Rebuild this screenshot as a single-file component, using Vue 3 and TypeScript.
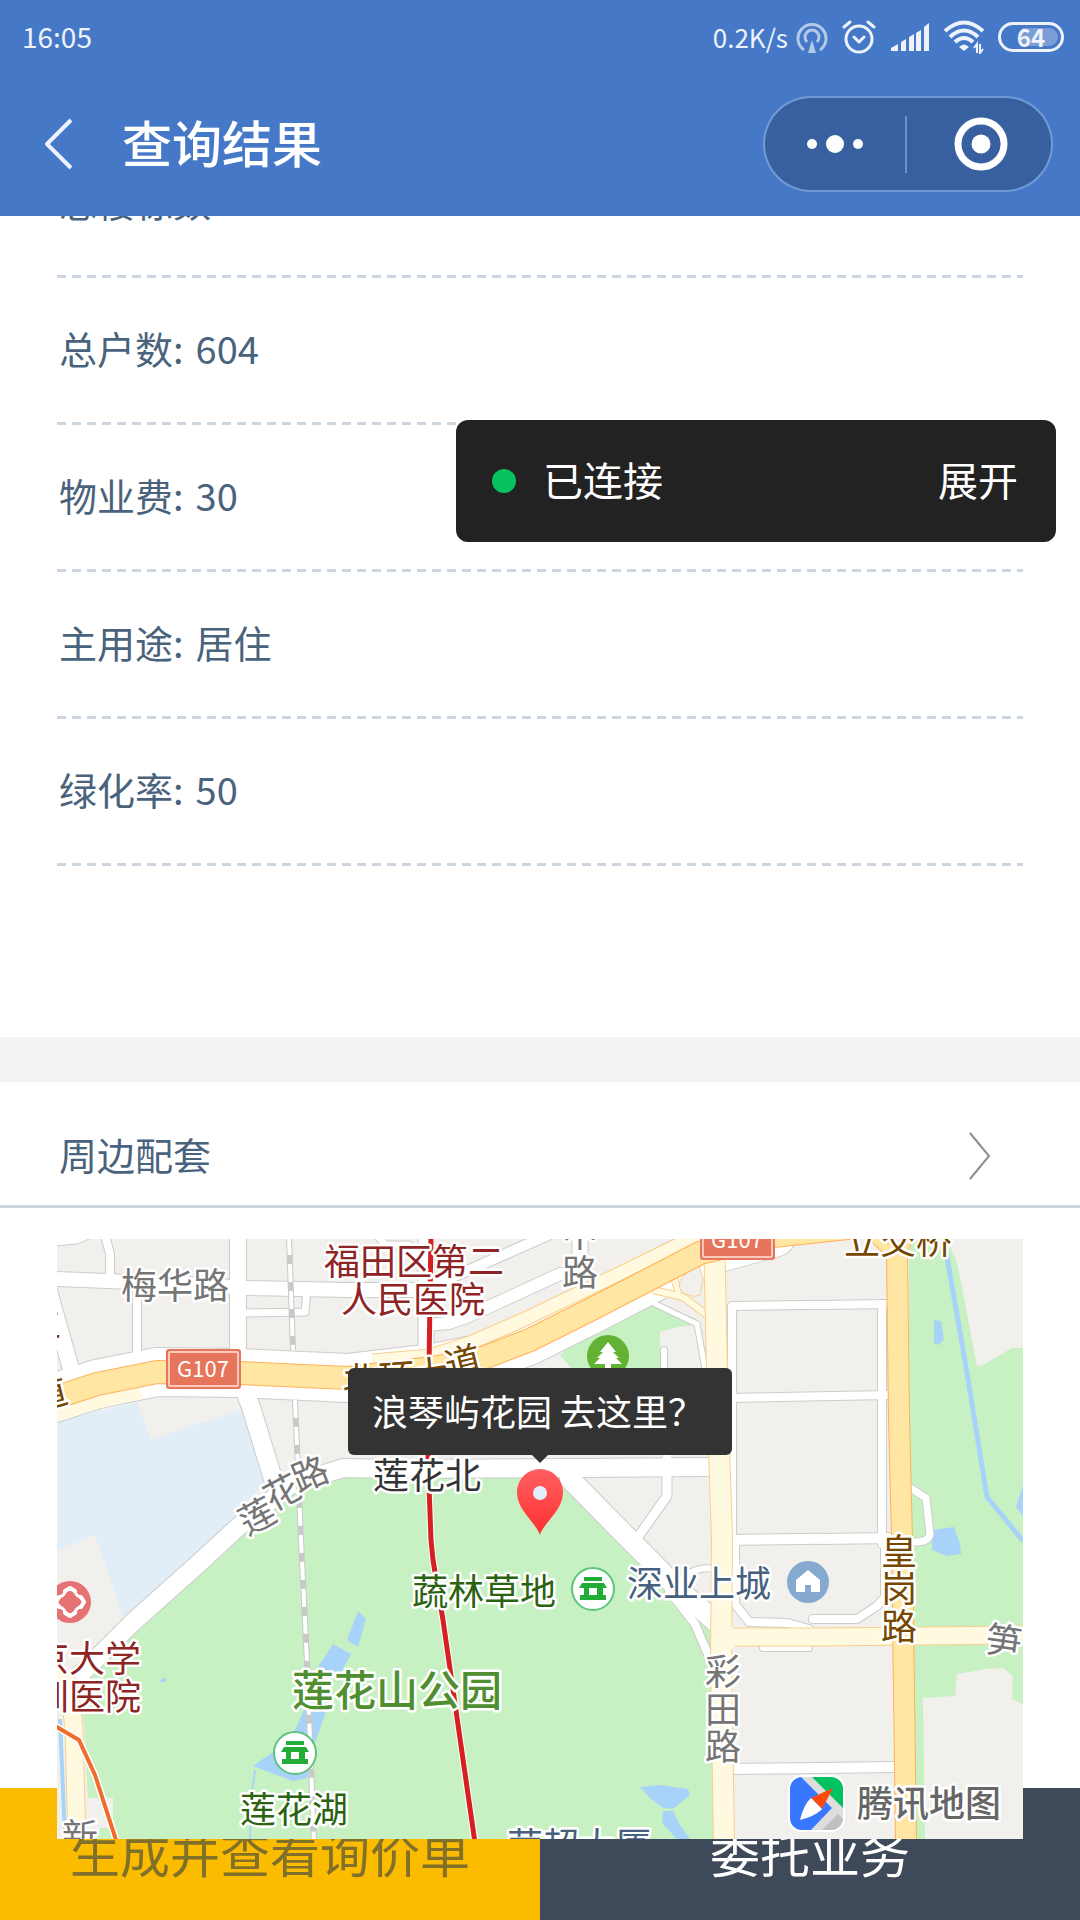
<script setup lang="ts">
interface InfoRow {
  label: string
  value: string
}

interface MapLabel {
  text: string
  x: number
  y: number
  kind: string
  turn?: number
}

const rows: InfoRow[] = [
  { label: '总楼栋数', value: '' },
  { label: '总户数:', value: '604' },
  { label: '物业费:', value: '30' },
  { label: '主用途:', value: '居住' },
  { label: '绿化率:', value: '50' },
]

// Streets that share one casing pass and one fill pass, so junctions stay open.
const streets: { d: string; w: number }[] = [
  { d: 'M0 40 126 45 190 49 290 51 366 51', w: 14 },
  { d: 'M-4 3 20 1 40 -8', w: 7 },
  { d: 'M48 -4 53 15 53 42', w: 8 },
  { d: 'M-10 45 14 130', w: 16 },
  { d: 'M80 45V118', w: 8 },
  { d: 'M181 -4V125', w: 16 },
  { d: 'M186 74 248 73 250 50', w: 7 },
  { d: 'M369 -4V125', w: 15 },
  { d: 'M370 86 392 84 412 77 503 35', w: 12 },
  { d: 'M372 48 410 32 500 -8', w: 10 },
  { d: 'M320 -4 328 6 352 6 372 28', w: 7 },
  { d: 'M523 -4V62', w: 15 },
  { d: 'M190 158 194 168 217 243', w: 18 },
  { d: 'M10 449 76 383 140 326 181 288 233 246 286 229 343 230 520 229 655 228', w: 18 },
  { d: 'M513 240 570 298 593 321 623 352 660 384', w: 20 },
  { d: 'M612 352 638 385 655 425', w: 8 },
  { d: 'M660 330Q638 326 622 342', w: 6 },
  { d: 'M610 216V257L576 305', w: 9 },
  { d: 'M607 111V134', w: 6 },
  { d: 'M533 90 588 60 640 85 648 130', w: 5 },
  { d: 'M675 300V67L833 65', w: 8 },
  { d: 'M825 65V305', w: 8 },
  { d: 'M670 159 835 156', w: 8 },
  { d: 'M668 301 838 299', w: 10 },
  { d: 'M678 300V365L692 383 730 384 752 390', w: 8 },
  { d: 'M828 300V358L820 367 800 380H756', w: 8 },
  { d: 'M706 409H752', w: 6 },
  { d: 'M668 530 840 528', w: 10 },
  { d: 'M852 248 869 259 873 295Q872 304 852 303', w: 7 },
]

const labels: MapLabel[] = [
  { text: '梅华路', x: 118, y: 60, kind: 'street' },
  { text: '福田区第二', x: 357, y: 36, kind: 'hospital' },
  { text: '人民医院', x: 356, y: 74, kind: 'hospital' },
  { text: '中', x: 523, y: 8, kind: 'street' },
  { text: '路', x: 523, y: 47, kind: 'street' },
  { text: '北', x: 304, y: 154, kind: 'avenue', turn: 2 },
  { text: '环', x: 340, y: 151, kind: 'avenue', turn: -4 },
  { text: '大', x: 374, y: 148, kind: 'avenue', turn: -8 },
  { text: '道', x: 406, y: 136, kind: 'avenue', turn: -14 },
  { text: '道', x: -8, y: 168, kind: 'avenue', turn: -14 },
  { text: '生', x: -14, y: 97, kind: 'hospital' },
  { text: '立交桥', x: 841, y: 15, kind: 'avenue' },
  { text: '莲', x: 200, y: 290, kind: 'street', turn: -28 },
  { text: '花', x: 225, y: 266, kind: 'street', turn: -28 },
  { text: '路', x: 253, y: 248, kind: 'street', turn: -22 },
  { text: '莲花北', x: 370, y: 250, kind: 'place' },
  { text: '蔬林草地', x: 427, y: 366, kind: 'lawn' },
  { text: '深业上城', x: 642, y: 358, kind: 'estate' },
  { text: '皇', x: 842, y: 326, kind: 'avenue' },
  { text: '岗', x: 842, y: 363, kind: 'avenue' },
  { text: '路', x: 842, y: 401, kind: 'avenue' },
  { text: '彩', x: 666, y: 446, kind: 'street' },
  { text: '田', x: 666, y: 484, kind: 'street' },
  { text: '路', x: 666, y: 521, kind: 'street' },
  { text: '笋', x: 947, y: 415, kind: 'street', turn: 8 },
  { text: '莲花山公园', x: 340, y: 467, kind: 'park' },
  { text: '莲花湖', x: 237, y: 584, kind: 'lawn' },
  { text: '京大学', x: 30, y: 433, kind: 'hospital' },
  { text: '圳医院', x: 30, y: 471, kind: 'hospital' },
  { text: '新', x: 23, y: 611, kind: 'street' },
  { text: '荣超大厦', x: 522, y: 620, kind: 'estate' },
]

const pavilions = [
  { x: 536, y: 350 },
  { x: 238, y: 514 },
]

const turned = (l: MapLabel): string | undefined =>
  l.turn ? `rotate(${l.turn} ${l.x} ${l.y - 13})` : undefined
</script>

<template>
  <div class="page">
    <header class="header">
      <div class="status">
        <time class="clock">16:05</time>
        <div class="indicators">
          <div class="network">
            <span class="speed">0.2K/s</span>
            <svg width="32" height="34" viewBox="0 0 32 34" fill="none" stroke="#b4c8e9" stroke-width="3" aria-hidden="true">
              <path d="M8 30A14 14 0 1 1 24 30" />
              <path d="M11 22A7 7 0 1 1 21 22" />
              <path d="M16 20 20 33H12Z" fill="#b4c8e9" stroke="none" />
            </svg>
          </div>
          <svg width="34" height="34" viewBox="0 0 34 34" fill="none" stroke="#edf2fb" stroke-width="3" stroke-linecap="round" stroke-linejoin="round" aria-hidden="true">
            <circle cx="17" cy="19" r="13" />
            <path d="M12 17 17 22 22 17M2 7 8 2M32 7 26 2" />
          </svg>
          <svg width="40" height="30" viewBox="0 0 40 30" fill="#edf2fb" aria-hidden="true">
            <path d="M1 26 8 22V29H1ZM11 20 16 17V29H11ZM19 15 24 12V29H19ZM26 11 31 8V29H26ZM34 5 39 1V29H34Z" />
          </svg>
          <svg width="40" height="34" viewBox="0 0 40 34" fill="none" stroke="#edf2fb" aria-hidden="true">
            <path d="M1 11Q20 -6 39 11M6 17Q20 4 34 17M11 22Q20 14 29 22" stroke-width="4" />
            <path d="M20 31 15 27Q20 22 25 27Z" fill="#edf2fb" stroke="none" />
            <path d="M33 33V24L30 28M36 24V33L39 29" stroke-width="2" />
          </svg>
          <span class="battery">64</span>
        </div>
      </div>
      <div class="nav">
        <button class="back" type="button" aria-label="返回">
          <svg width="30" height="54" viewBox="0 0 30 54" fill="none" stroke="#edf2fb" stroke-width="4" stroke-linejoin="round" aria-hidden="true">
            <path d="M27 3 3 27 27 51" />
          </svg>
        </button>
        <h1 class="title">查询结果</h1>
        <div class="capsule">
          <button type="button" aria-label="更多">
            <svg width="60" height="24" viewBox="0 0 60 24" fill="#fff" aria-hidden="true">
              <circle cx="7" cy="12" r="5" />
              <circle cx="30" cy="12" r="9" />
              <circle cx="53" cy="12" r="5" />
            </svg>
          </button>
          <i class="capsule-line"></i>
          <button type="button" aria-label="关闭">
            <svg width="54" height="54" viewBox="0 0 54 54" aria-hidden="true">
              <circle cx="27" cy="27" r="23" fill="none" stroke="#fff" stroke-width="7" />
              <circle cx="27" cy="27" r="9.5" fill="#fff" />
            </svg>
          </button>
        </div>
      </div>
    </header>

    <main>
      <ul class="info">
        <li v-for="row in rows" :key="row.label">
          <span>{{ row.label }}</span>
          <span>{{ row.value }}</span>
        </li>
      </ul>

      <section class="nearby">
        <a class="nearby-head" href="#map">
          <span>周边配套</span>
          <svg width="24" height="48" viewBox="0 0 24 48" fill="none" stroke="#8f8f8f" stroke-width="2" aria-hidden="true">
            <path d="M2 1 21 24 2 47" />
          </svg>
        </a>

        <div id="map" class="map">
          <svg class="map-canvas" viewBox="0 0 966 600" role="img" aria-label="地图">
            <defs>
              <linearGradient id="pinFill" x1="0" y1="0" x2="0" y2="1">
                <stop offset="0" stop-color="#ff5f5f" />
                <stop offset="1" stop-color="#ff3030" />
              </linearGradient>
              <clipPath id="logoShape"><rect width="53" height="53" rx="12" /></clipPath>
            </defs>

            <rect width="966" height="600" fill="#f1f0ed" />
            <path fill="#e1eef8" d="M0 182 80 163 94 200 185 171 210 241 156 305 75 374 66 377 38 296 0 311Z" />
            <g fill="#c8f1c3">
              <path d="M286 233 513 236 655 390 660 600H40L43 589H56V559H31L27 488 22 441 76 383 178 293 233 246Z" />
              <path d="M596 63 533 91 503 116 515 130H603V93L620 88 640 86 647 97 640 80Z" />
              <path d="M852 0 893 8 900 23 920 127 926 126 955 109H966V465L955 460 956 437 946 429 930 430 900 435 898 457 866 459 868 600H850Z" />
            </g>
            <g fill="#a8d3f8">
              <path d="M877 81 884 82 887 100 882 106 877 104Z" />
              <path d="M875 291 897 288 903 305 904 315 890 317 875 311Z" />
              <path d="M966 246 959 268 966 277Z" />
              <path d="M301 372 309 380 301 408 290 401Z" />
              <path d="M276 405 294 415 280 441 261 428Z" />
              <path d="M273 461 258 504 250 539 236 542 196 527 216 513 238 491 250 464Z" />
              <path d="M583 548 603 546 631 550 633 556 616 570 606 569 593 559Z" />
              <path d="M606 572 616 572 623 586 633 600 620 600 605 584Z" />
              <path d="M103 442 108 438 110 441 105 444Z" />
            </g>
            <g fill="none" stroke="#a8d3f8">
              <path d="M889 12 910 134 930 258 966 302" stroke-width="5" />
              <path d="M198 531 195 554 193 600" stroke-width="2" />
              <path d="M3 480 8 600" stroke-width="4" />
            </g>

            <g fill="none" stroke-linejoin="round">
              <g stroke="#cccccb" stroke-linecap="round">
                <path v-for="s in streets" :key="s.d" :d="s.d" :stroke-width="s.w + 2" />
                <path d="M-6 160 40 145 100 133 183 134 290 139 376 129 426 119 473 101 533 71 643 14 716 -6" stroke-width="50" />
              </g>
              <g stroke="#fff" stroke-linecap="round">
                <path v-for="s in streets" :key="s.d" :d="s.d" :stroke-width="s.w" />
                <path d="M-6 160 40 145 100 133 183 134 290 139 376 129 426 119 473 101 533 71 643 14 716 -6" stroke-width="48" />
              </g>
              <path d="M-4 178 40 164 84 154" stroke="#fff9df" stroke-width="12" />
              <path d="M316 122 373 117 413 104 466 81 566 33 650 -8" stroke="#f9cf8c" stroke-width="15" />
              <path d="M316 122 373 117 413 104 466 81 566 33 650 -8" stroke="#fff9df" stroke-width="13" />
              <path d="M596 51 626 58 650 76M616 36 622 54" stroke="#f9cf8c" stroke-width="8" />
              <path d="M596 51 626 58 650 76M616 36 622 54" stroke="#fff9df" stroke-width="6" />
              <g stroke="#f9cf8c">
                <path d="M657 0 658 40 661 180 665 300 664 420 667 604" stroke-width="22" />
                <path d="M668 398 760 398 970 396" stroke-width="19" />
                <path d="M-4 430 12 445 17 490 20 604" stroke-width="19" />
              </g>
              <g stroke="#fff9df">
                <path d="M657 0 658 40 661 180 665 300 664 420 667 604" stroke-width="20" />
                <path d="M668 398 760 398 970 396" stroke-width="17" />
                <path d="M-4 430 12 445 17 490 20 604" stroke-width="17" />
                <path d="M670 386Q676 398 700 399M670 412Q676 399 700 398" stroke-width="6" />
              </g>
              <path d="M642 26 646 40 643 56Q634 60 624 52 618 42 632 32Z" fill="#f1f0ed" stroke="#f9cf8c" />
              <g stroke="#ffb158">
                <path d="M-6 160 40 145 100 133 183 134 290 139 376 129 426 119 473 101 533 71 643 14 716 -3 800 -12" stroke-width="24" />
                <path d="M814 -6 838 18M852 -6 842 20" stroke-width="12" />
                <path d="M840 16 842 180 845 301 849 604" stroke-width="22" />
              </g>
              <g stroke="#ffe6a2">
                <path d="M-6 160 40 145 100 133 183 134 290 139 376 129 426 119 473 101 533 71 643 14 716 -3 800 -12" stroke-width="22" />
                <path d="M814 -6 838 18M852 -6 842 20" stroke-width="10" />
                <path d="M840 14 842 180 845 301 849 604" stroke-width="20" />
              </g>

              <path d="M232 -2 236 111M238 161 241 231 244 301 250 424 257 604" stroke="#c9c9ca" stroke-width="6" />
              <path d="M232 -2 236 111M238 161 241 231 244 301 250 424 257 604" stroke="#fff" stroke-width="4" stroke-dasharray="18 9" />
              <path d="M-2 487 22 501 38 536 60 604" stroke="#fff" stroke-width="7" />
              <path d="M-2 487 22 501 38 536 60 604" stroke="#f06c2c" stroke-width="4" />
              <path d="M374 -2 373 58 372 130 371 220 374 301 376 321 386 381 418 604" stroke="#fff" stroke-width="7" />
              <path d="M374 -2 373 58 372 130 371 220 374 301 376 321 386 381 418 604" stroke="#d51f20" stroke-width="5" />
            </g>

            <g v-for="(top, i) in [110, -19]" :key="top" :transform="`translate(${i ? 643 : 109} ${top})`">
              <rect width="75" height="40" rx="3" fill="#e7755b" />
              <rect x="3" y="3" width="69" height="34" rx="1" fill="none" stroke="#f9c9bd" stroke-width="2" />
              <text class="shield" x="37" y="28">G107</text>
            </g>

            <text
              v-for="(l, i) in labels"
              :key="i"
              class="label"
              :class="l.kind"
              :x="l.x"
              :y="l.y"
              :transform="turned(l)"
            >{{ l.text }}</text>

            <g v-for="p in pavilions" :key="p.x" :transform="`translate(${p.x} ${p.y})`">
              <circle r="21" fill="#fff" stroke="#5cc47d" stroke-width="2" />
              <path fill="#22ac38" d="M-9 -12H9V-8H-9ZM-11 -6H11L14 -1H10V6H13V11H-13V6H-9V-1H-14ZM-4 -1V6H4V-1Z" fill-rule="evenodd" />
            </g>

            <g transform="translate(551 117)">
              <circle r="21" fill="#62b236" />
              <path fill="#fff" d="M0 -14 8 -4H5L11 2H8L14 8H3V14H-3V8H-14L-8 2H-11L-5 -4H-8Z" />
            </g>
            <g transform="translate(751 343)">
              <circle r="21" fill="#86a9d0" />
              <path fill="#fff" d="M0 -12 12 -2V10H3V3H-3V10H-12V-2Z" />
            </g>
            <g transform="translate(13 363)">
              <circle r="21" fill="#e57373" />
              <path fill="none" stroke="#fff" stroke-width="4" stroke-linejoin="round" d="M-5 -9V-11L0 -14 5 -11V-9M9 -5H11L14 0 11 5H9M5 9V11L0 14 -5 11V9M-9 5H-11L-14 0 -11 -5H-9" />
              <path stroke="#fff" stroke-width="3" d="M-5 -9 -9 -5M5 -9 9 -5M5 9 9 5M-5 9 -9 5" />
            </g>

            <path fill="url(#pinFill)" d="M483 296C479 283 460 272 460 253A23 23 0 0 1 506 253C506 272 487 283 483 296Z" />
            <circle cx="483" cy="254" r="7" fill="#e4edfb" />

            <g transform="translate(733 538)">
              <rect x="-2" y="-2" width="57" height="57" rx="14" fill="#fff" />
              <g clip-path="url(#logoShape)">
                <rect width="53" height="53" fill="#dedede" />
                <path fill="#3877ff" d="M0 0H11L42 31 21 53H0Z" />
                <path fill="#00c260" d="M22 0H53V31Z" />
                <path fill="#c0c0c0" d="M32 53 48 37 53 42V53Z" />
              </g>
              <path fill="#ff4a0e" d="M43 11 32 32 21 21Z" />
              <path fill="#fff" d="M21 21 32 32Q26 39 10 43 14 27 21 21Z" />
            </g>
            <text class="label brand" x="872" y="578">腾讯地图</text>
          </svg>

          <button class="callout" type="button">浪琴屿花园 去这里？</button>
        </div>
      </section>
    </main>

    <aside class="debug">
      <i class="dot"></i>
      <span>已连接</span>
      <button type="button">展开</button>
    </aside>

    <footer class="actions">
      <button class="quote" type="button">生成并查看询价单</button>
      <button class="entrust" type="button">委托业务</button>
    </footer>
  </div>
</template>

<style>
body {
  margin: 0;
  background: #fff;
}
</style>

<style scoped>
.page {
  min-height: 100vh;
  font-family: "Noto Sans CJK SC", "Noto Sans", sans-serif;
  font-size: 38px;
  color: #4a637c;
}

button {
  padding: 0;
  border: 0;
  background: none;
  color: inherit;
  font: inherit;
  cursor: pointer;
}

svg {
  display: block;
  flex: none;
}

.header {
  position: sticky;
  top: 0;
  z-index: 5;
  height: 216px;
  background: #4678c8;
  color: #fff;
}

.status {
  display: flex;
  align-items: center;
  justify-content: space-between;
  height: 74px;
  padding: 0 16px 0 22px;
  box-sizing: border-box;
  color: #edf2fb;
}

.clock {
  padding-bottom: 2px;
  font-size: 28px;
}

.indicators {
  display: flex;
  align-items: center;
  gap: 14px;
}

.network {
  display: flex;
  align-items: center;
  gap: 8px;
}

.speed {
  padding-bottom: 2px;
  font-size: 26px;
}

.battery {
  width: 66px;
  height: 30px;
  box-sizing: border-box;
  border: 3px solid #edf2fb;
  border-radius: 15px;
  background: linear-gradient(90deg, transparent 18px, #7b9dd8 18px) content-box;
  padding: 3px;
  font-size: 24px;
  font-weight: 700;
  line-height: 18px;
  text-align: center;
}

.nav {
  display: flex;
  align-items: center;
  height: 140px;
  padding: 0 27px 0 44px;
}

.title {
  flex: 1;
  margin: 0 0 0 48px;
  padding-bottom: 6px;
  font-size: 50px;
  font-weight: 500;
  line-height: 60px;
}

.capsule {
  display: flex;
  align-items: center;
  width: 290px;
  height: 96px;
  box-sizing: border-box;
  border: 2px solid rgba(255, 255, 255, 0.25);
  border-radius: 48px;
  background: rgba(0, 0, 0, 0.2);
  background-clip: padding-box;
}

.capsule button {
  flex: 1;
  display: flex;
  justify-content: center;
}

.capsule button:last-child {
  padding-left: 4px;
}

.capsule-line {
  width: 2px;
  height: 57px;
  background: rgba(255, 255, 255, 0.3);
}

/* The list is scrolled: its first row sits partly under the header. */
.info {
  margin: -85px 57px 171px;
  padding: 0;
  list-style: none;
}

.info li {
  display: flex;
  gap: 12px;
  height: 147px;
  padding: 0 2px;
  box-sizing: border-box;
  line-height: 140px;
  background: repeating-linear-gradient(90deg, #cbd6e1 0 9px, transparent 9px 15px) left bottom / 100% 3px no-repeat;
}

.nearby {
  border-top: 45px solid #f3f3f3;
}

.nearby-head {
  display: flex;
  align-items: center;
  justify-content: space-between;
  height: 126px;
  padding: 24px 88px 0 59px;
  box-sizing: border-box;
  border-bottom: 3px solid #cbd6e1;
  color: inherit;
  text-decoration: none;
}

.nearby-head span {
  padding-bottom: 4px;
}

.map {
  position: relative;
  z-index: 2;
  margin: 31px 57px 0;
}

.map-canvas {
  width: 100%;
  height: auto;
}

.label {
  font-size: 36px;
  text-anchor: middle;
  stroke: #fff;
  stroke-width: 5px;
  stroke-linejoin: round;
  paint-order: stroke;
}

.street { fill: #757575; }
.hospital { fill: #8e2424; }
.avenue { fill: #764700; }
.place { fill: #333; }
.lawn { fill: #2b6310; }
.estate { fill: #46607e; }
.park {
  fill: #4f8f32;
  font-size: 42px;
  font-weight: 500;
}
.brand {
  fill: #666;
  font-weight: 500;
}

.shield {
  fill: #fff;
  font-size: 22px;
  text-anchor: middle;
}

.callout {
  position: absolute;
  top: 129px;
  left: 50%;
  width: 384px;
  height: 87px;
  padding: 0 4px 4px 0;
  transform: translateX(-50%);
  border-radius: 6px;
  background: #333;
  color: #fff;
  font-size: 36px;
  white-space: nowrap;
}

.callout::after {
  content: "";
  position: absolute;
  top: 100%;
  left: 50%;
  transform: translateX(-50%);
  border: 8px solid transparent;
  border-top-color: #333;
  border-bottom: 0;
}

.debug {
  position: fixed;
  top: 420px;
  right: 24px;
  z-index: 6;
  display: flex;
  align-items: center;
  width: 600px;
  height: 122px;
  padding: 0 38px 0 36px;
  box-sizing: border-box;
  border-radius: 12px;
  background: #222;
  color: #fff;
  font-size: 40px;
}

.debug span {
  flex: 1;
}

.debug span,
.debug button {
  padding-bottom: 4px;
}

.dot {
  width: 24px;
  height: 24px;
  margin-right: 27px;
  border-radius: 50%;
  background: #07c160;
}

.actions {
  position: fixed;
  right: 0;
  bottom: 0;
  left: 0;
  z-index: 1;
  display: flex;
  height: 132px;
  font-size: 50px;
}

.actions button {
  flex: 1;
  padding-bottom: 6px;
}

.quote {
  background: #fbbc00;
  color: #80702a;
}

.entrust {
  background: #3e4959;
  color: #fff;
}
</style>
